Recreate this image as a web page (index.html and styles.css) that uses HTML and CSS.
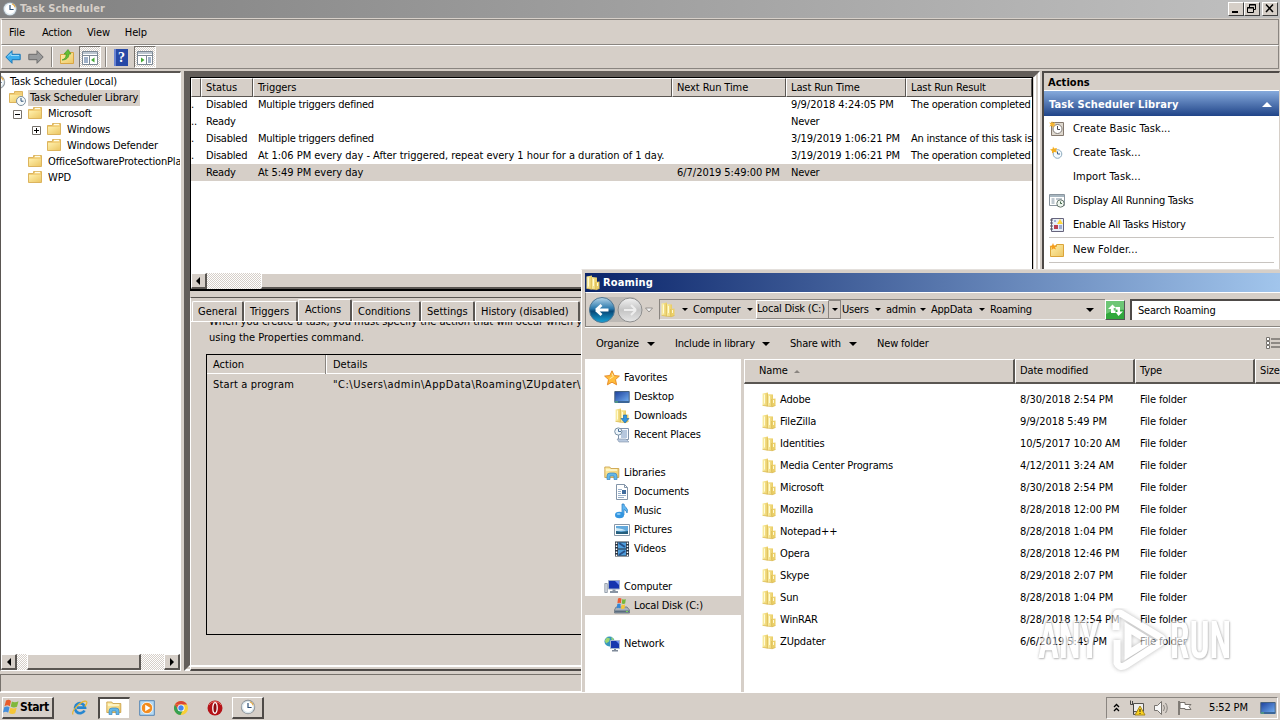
FILE: index.html
```html
<!DOCTYPE html>
<html lang="en">
  <head>
    <meta charset="UTF-8" />
    <title>Task Scheduler</title>
    <link rel="stylesheet" href="styles.css">
  </head>

  <body>
    <!-- icon sprite -->
    <svg class="sprite" width="0" height="0">
      <defs>
        <linearGradient id="gold" x1="0" y1="0" x2="1" y2="1">
          <stop offset="0" stop-color="#fff0ac" /><stop offset="1" stop-color="#ecc765" />
        </linearGradient>
        <linearGradient id="leaf" x1="0" y1="0" x2="1" y2="0">
          <stop offset="0" stop-color="#fbf0a8" /><stop offset="1" stop-color="#e9cb62" />
        </linearGradient>
        <linearGradient id="screen" x1="0" y1="0" x2="1" y2="1">
          <stop offset="0" stop-color="#1c409c" /><stop offset="1" stop-color="#72aef0" />
        </linearGradient>
        <linearGradient id="bluebtn" x1="0" y1="0" x2="0" y2="1">
          <stop offset="0" stop-color="#b5d4e8" /><stop offset=".45" stop-color="#2878ac" /><stop offset=".55" stop-color="#084878" /><stop offset="1" stop-color="#18a4d8" />
        </linearGradient>
        <linearGradient id="greybtn" x1="0" y1="0" x2="0" y2="1">
          <stop offset="0" stop-color="#f2f2f2" /><stop offset=".5" stop-color="#c4c4c4" /><stop offset="1" stop-color="#e6e6e6" />
        </linearGradient>
      </defs>
      <symbol id="clock" viewBox="0 0 16 16">
        <circle cx="8" cy="8" r="7.2" fill="#8c9298" /><circle cx="8" cy="8" r="6.3" fill="#dce8ee" /><circle cx="8" cy="8" r="4.9" fill="#fff" />
        <path d="M8 4v4.5h3.6" fill="none" stroke="#2c5078" stroke-width="1.2" /><path d="M10 2.8a5.6 5.6 0 0 1 3.3 3.6" fill="none" stroke="#e8a83c" stroke-width="1.2" />
      </symbol>
      <symbol id="folder" viewBox="0 0 16 16">
        <path d="M1.5 3.5h5v-2h8v11h-13z" fill="#f2cf78" stroke="#dcb45e" /><path d="M2 5h12v7H2z" fill="url(#gold)" /><path d="M8 2.5h5" stroke="#fffbe4" stroke-width="1.3" />
      </symbol>
      <symbol id="folderclock" viewBox="0 0 20 16">
        <path d="M1.5 3.5h5v-2h8v11h-13z" fill="#f2cf78" stroke="#dcb45e" /><path d="M2 5h12v7H2z" fill="url(#gold)" />
        <circle cx="13" cy="11" r="4.5" fill="#f6fafa" stroke="#7c8e9e" /><path d="M13 8v3.2h2.5" fill="none" stroke="#2c5078" />
      </symbol>
      <symbol id="files" viewBox="0 0 16 16">
        <path d="M1.500 1.500L7 .5v14l-5.500-1z" fill="url(#leaf)" /><path d="M6.500 2l5.500.5v12l-5.500-.5z" fill="url(#leaf)" />
        <path d="M10.500 7l4-.5v7l-3.500 1.500z" fill="#ecd06a" /><path d="M6.500 2v12M10.700 7v7.500M1.500 13.300l5.200.9 4.500.5 3.300-1.200" fill="none" stroke="#d9b850" stroke-width=".7" /><path d="M3.500 2.500v9M8.500 4v7M12.500 8v3" stroke="#fffbd6" />
      </symbol>
      <symbol id="back" viewBox="0 0 16 16"><path d="M.8 8l6.200-6.300v3.600h8.200v5.400H7v3.600z" fill="#3eaeec" stroke="#1b78b8" /><path d="M3 7.500l3-3v2h8" fill="none" stroke="#9cdcfa" /></symbol>
      <symbol id="forward" viewBox="0 0 16 16"><path d="M15.200 8L9 1.700v3.600H.8v5.400H9v3.600z" fill="#9a9a9a" stroke="#6c6c6c" /></symbol>
      <symbol id="upfolder" viewBox="0 0 16 16"><path d="M1.500 5.500h5l1.500-2h6.500v11h-13z" fill="url(#gold)" stroke="#d9a544" /><path d="M3 11c3-1 4.500-3 4-6H5l4-4.500L12 5h-2c0 4-3 6-7 6z" fill="#64be34" stroke="#3c9422" stroke-width=".6" /></symbol>
      <symbol id="panel" viewBox="0 0 16 14"><path d="M.5.5h15v13H.5z" fill="#fff" stroke="#7c8894" /><path d="M1 1h14v2H1z" fill="#bcc6d0" /><path d="M1 4.500h14M7.500 5v8.500" stroke="#7c8894" /><path d="M2 7h4M2 9h4M2 11h4" stroke="#3f6392" /><path d="M12.500 6.500v5l-3.500-2.500z" fill="#45a735" /></symbol>
      <symbol id="panelright" viewBox="0 0 16 14"><path d="M.5.5h15v13H.5z" fill="#fff" stroke="#7c8894" /><path d="M1 1h14v2H1z" fill="#bcc6d0" /><path d="M1 4.500h14M9.500 5v8.500" stroke="#7c8894" /><path d="M11 7h3M11 9h3M11 11h3" stroke="#3f6392" /><path d="M4 6.500v5l3.500-2.500z" fill="#45a735" /></symbol>
      <symbol id="basictask" viewBox="0 0 16 16"><path d="M2.500 1.500h12v13h-12z" fill="#ded8ce" stroke="#84786e" /><circle cx="8.500" cy="8" r="4.500" fill="#fff" stroke="#827c78" /><path d="M8.500 5v3.500H11" fill="none" stroke="#4c4c54" /><path d="M3 0l1 2.200L6.300 1 5.200 3.200 7 4.300 4.800 4.500 4 7 2.800 4.800.3 5.500 1.700 3.500 0 1.500l2.300.5z" fill="#f6b42c" /></symbol>
      <symbol id="newtask" viewBox="0 0 16 16"><circle cx="8.500" cy="9" r="4.300" fill="#f3faff" stroke="#8daabd" /><path d="M8.500 6.500V9H11" fill="none" stroke="#3e5f82" /><path d="M4 1.500l1.200 2L8 3l-1 2.200L8 7.500 5 7 3 8.500 3 6 1 4.500 3.500 4z" fill="#f4ae20" /></symbol>
      <symbol id="running" viewBox="0 0 16 16"><path d="M.5 1.500h15v11H.5z" fill="#fff" stroke="#8a959e" /><path d="M1 2h14v2H1z" fill="#a7b6c0" /><path d="M2.500 6h3M2.500 8h3M2.500 10h3M7 6h6" stroke="#8193a2" /><circle cx="11.500" cy="10.500" r="3.700" fill="#edf5ed" stroke="#67766f" /><path d="M11.500 8.500v2H13" fill="none" stroke="#416649" /></symbol>
      <symbol id="history" viewBox="0 0 16 16"><path d="M2.500 1.500h12v13h-12z" fill="#e7edf7" stroke="#66647c" /><path d="M1 3h3M1 6h3M1 9h3M1 12h3" stroke="#54525f" /><path d="M11 2l3 5H8z" fill="#ffd83a" /><path d="M5 8h4v4H5z" fill="#b83e50" /><path d="M10 9h3M10 11h3M5 4h2" stroke="#596fae" /></symbol>
      <symbol id="newfolder" viewBox="0 0 16 16"><path d="M1.500 4.500h6v-2h7v12h-13z" fill="url(#gold)" stroke="#dba43a" /><path d="M4 1l1 2.500 2.500-.5-1.500 2L7 7.500 4.500 6.500 2.500 8 2.700 5.500.5 4l2.500-.5z" fill="#f69d19" /></symbol>
      <symbol id="star" viewBox="0 0 16 16"><path d="M8 .8l2.200 4.700 5.200.6-3.900 3.500 1.100 5.200L8 12.200l-4.600 2.600 1.100-5.200L.6 6.100l5.200-.6z" fill="#ffbd3c" stroke="#e48620" stroke-width=".9" /><path d="M8 3.500l1.300 3L5.500 9" fill="none" stroke="#ffebaa" /></symbol>
      <symbol id="desktop" viewBox="0 0 16 16"><path d="M.8 2.500h14.400v10H.8z" fill="url(#screen)" stroke="#46617e" /><path d="M.5 12h15v2H.5z" fill="#3b6698" /><path d="M1 12.500h3v1H1z" fill="#62c272" /></symbol>
      <symbol id="downloads" viewBox="0 0 16 16"><use href="#files" /><path d="M9.500 7h3v3.500h2.500L11 15l-4-4.500h2.500z" fill="#2e94e2" stroke="#1462a6" stroke-width=".6" /></symbol>
      <symbol id="recent" viewBox="0 0 16 16"><path d="M4.500 1.500h10v11h-10z" fill="#f6faff" stroke="#8295ad" /><path d="M8 4h5M8 6h5M7 8h6M7 10h6" stroke="#7695bd" /><circle cx="4.300" cy="4.500" r="3.600" fill="#edf5fb" stroke="#7990a5" /><path d="M4.500 2v2.500H7" fill="none" stroke="#4d739b" /><path d="M3 12h9l3 3H5z" fill="#b8c9df" stroke="#8192a8" stroke-width=".6" /></symbol>
      <symbol id="libs" viewBox="0 0 16 16"><path d="M.8 4.500V2h5l1 1.500h8v9H.8z" fill="url(#gold)" stroke="#c69b3e" stroke-width=".8" /><path d="M2 5h11" stroke="#fffbd8" stroke-width="1.400" /><path d="M3 14.500V11q0-3 3-3h4q3 0 3 3v3.500h-3V11H6v3.500z" fill="#63b7e9" stroke="#3c86bd" stroke-width=".7" /></symbol>
      <symbol id="document" viewBox="0 0 16 16"><path d="M2.500.5h8l3 3v12h-11z" fill="#fff" stroke="#8395a9" /><path d="M10.500.5v3h3" fill="none" stroke="#8395a9" /><path d="M4 5.500h4M4 7.500h3M4 9.500h3M4 11.500h8M4 13.500h6" stroke="#98b0ca" /><path d="M8 6h4v4H8z" fill="#406c9d" /></symbol>
      <symbol id="music" viewBox="0 0 16 16"><path d="M8 1h2q0 2 2 3.500 2.500 2 1 5.500-.5-2.500-3-3.500V12H8z" fill="#61b7f3" stroke="#257abd" stroke-width=".7" /><ellipse cx="5.500" cy="12" rx="4.500" ry="3.300" fill="#3395e0" /><ellipse cx="4.700" cy="11" rx="2" ry="1.100" fill="#8cccf6" /></symbol>
      <symbol id="picture" viewBox="0 0 16 16"><path d="M.5 2.500h15v11H.5z" fill="#fff" stroke="#8998a8" /><path d="M2 4h12v8H2z" fill="#62a9dc" /><path d="M2 9l5 1 7-1v3H2z" fill="#255f7d" /><path d="M2 6l6 1 4 1.500-10 .5z" fill="#d1ecf8" /></symbol>
      <symbol id="video" viewBox="0 0 16 16"><path d="M1 .5h14v15H1z" fill="#2a3442" /><path d="M4 1.500h8v6H4zM4 8.500h8v6H4z" fill="#4f9ddb" /><path d="M5 2l6 4M5 14l6-4" stroke="#285188" stroke-width="2" /><path d="M2.500 1.500v14M13.500 1.500v14" stroke="#fff" stroke-width="1.500" stroke-dasharray="1.500 1.500" /></symbol>
      <symbol id="computer" viewBox="0 0 16 16"><path d="M.8 4.500h2.500v9H.8z" fill="#d7dce2" stroke="#8792a0" stroke-width=".8" /><path d="M4.500 1.500h11v8.500h-11z" fill="#1534ae" stroke="#9faec6" /><path d="M11 2h4v4z" fill="#718ff0" /><path d="M8.500 10.500h3V12H14v2H6v-2h2.500z" fill="#8995a4" /></symbol>
      <symbol id="disk" viewBox="0 0 16 16"><path d="M2 9h11l2.500 3v3H.5v-3z" fill="#a8b1bb" stroke="#66727e" stroke-width=".8" /><path d="M1 12.500h14v2H1z" fill="#5b6d7e" /><path d="M12 13h2v1h-2z" fill="#73dd4d" /><path d="M4 .5q2-1 3.500.3l-.6 4.500q-1.700-1-3.500 0z" fill="#ec5b32" /><path d="M8.300 1q1.500 1 3.500 0l-.6 4.500q-1.700.9-3.500 0z" fill="#76b83c" /><path d="M3.300 6q2-1 3.400.2l-.5 4q-1.700-1-3.500 0z" fill="#3486d5" /><path d="M7.600 6.500q1.700.9 3.500 0l-.6 4q-1.700.9-3.500 0z" fill="#f6c736" /></symbol>
      <symbol id="network" viewBox="0 0 16 16"><circle cx="5.500" cy="5.500" r="5" fill="#3697bf" /><path d="M3 1.500l3 1-1 3-3 2-1.200-3zM7 1l3 2-2 2z" fill="#9bd672" /><path d="M6.500 4.500h9v8h-9z" fill="#1636ae" stroke="#a8b8cf" /><path d="M12 5h3v3z" fill="#6c8df0" /><path d="M10 13h2v1h2v1.500H8V14h2z" fill="#7f8a99" /></symbol>
      <symbol id="flag" viewBox="0 0 16 16"><path d="M3 1.500q3-1.500 5 .5L6.800 7.200q-2.300-1.700-5.300 0z" fill="#e95c2b" /><path d="M8.900 2.500q3 1.700 6.600-.3L14 7.800q-3.300 1.500-6.300-.2z" fill="#80b83b" /><path d="M1.200 8.300q3-1.500 5.300 0L5.200 13.700Q3 12 0 13.500z" fill="#458fdc" /><path d="M7.400 8.800q3 1.500 6.300 0L12.200 14.300q-3 1.500-6.200-.2z" fill="#f5c637" /></symbol>
      <symbol id="ie" viewBox="0 0 16 16"><path d="M12.500 10.500A5 5 0 1 1 13 7.700H5" fill="none" stroke="#2686d0" stroke-width="2.700" /><path d="M1 14.500C-1 11 8 2 13 1.200c3-.3 2 3-.3 5.300" fill="none" stroke="#e9b631" stroke-width="1.200" /></symbol>
      <symbol id="player" viewBox="0 0 16 16"><path d="M.7.7h14.600v14.600H.7z" fill="#b5daf4" stroke="#5585b4" /><circle cx="8" cy="8" r="5.700" fill="#f38c1e" stroke="#fff" stroke-width=".8" /><path d="M6.200 4.800v6.400L11.500 8z" fill="#fff" /></symbol>
      <symbol id="chrome" viewBox="0 0 16 16"><circle cx="8" cy="8" r="7" fill="#f8cf38" /><path d="M1.900 4.500A7 7 0 0 1 14.100 4.500H8z" fill="#db4537" /><path d="M1.900 4.500a7 7 0 0 0 5.600 10.500l2.500-5L4.500 8z" fill="#37a052" /><path d="M1.900 4.500L5 9.500 8 4.800z" fill="#db4537" /><circle cx="8" cy="8" r="3.600" fill="#fff" /><circle cx="8" cy="8" r="2.700" fill="#4586ed" /></symbol>
      <symbol id="opera" viewBox="0 0 16 16"><circle cx="8" cy="8" r="7.500" fill="#b51218" /><path d="M2 5a7 7 0 0 1 12 0" stroke="#e8766a" fill="none" /><ellipse cx="8" cy="8" rx="2.200" ry="5.300" fill="#8e0b10" stroke="#fff" stroke-width="1.300" /></symbol>
    </svg>

    <div class="desktop">
      <div class="scheduler">
        <div class="titlebar">
          <svg class="icon"><use href="#clock" /></svg>
          <span class="title">Task Scheduler</span>
          <div class="winbtns">
            <div class="winbtn"><svg width="13" height="11"><path d="M3 9h6" stroke="#000" stroke-width="2" /></svg></div>
            <div class="winbtn"><svg width="13" height="11"><path d="M4.500 4V1.500h6v5H8.500M4 2h7M2.500 4.500h6v5h-6zM2 5h7" fill="none" stroke="#000" /></svg></div>
            <div class="winbtn gap"><svg width="13" height="11"><path d="M3 1.500l7 7.500M10 1.500L3 9" stroke="#000" stroke-width="1.500" /></svg></div>
          </div>
        </div>
        <div class="menubar"><span class="file">File</span><span>Action</span><span>View</span><span>Help</span></div>
        <div class="toolbar">
          <svg class="icon"><use href="#back" /></svg>
          <svg class="icon fwd"><use href="#forward" /></svg>
          <i class="sep"></i>
          <svg class="icon up"><use href="#upfolder" /></svg>
          <div class="pressed"><svg width="16" height="14"><use href="#panel" /></svg></div>
          <i class="sep second"></i>
          <svg class="help" width="14" height="17"><path d="M0 0h14v17H0z" fill="#2749a6" /><path d="M0 0h2v17H0z" fill="#6984d3" /><text x="4" y="13" class="qmark">?</text></svg>
          <div class="pressed last"><svg width="16" height="14"><use href="#panelright" /></svg></div>
        </div>

        <div class="main">
          <div class="tree">
            <div class="nodes">
              <div class="node root"><svg class="icon"><use href="#clock" /></svg><span>Task Scheduler (Local)</span></div>
              <div class="node lib"><svg width="20" height="16"><use href="#folderclock" /></svg><span class="picked">Task Scheduler Library</span></div>
              <div class="node l1"><svg class="box" width="9" height="9"><path d="M.5.5h8v8h-8z" fill="#fff" stroke="#77726c" /><path d="M2 4.500h5" stroke="#000" /></svg><svg class="icon"><use href="#folder" /></svg><span>Microsoft</span></div>
              <div class="node l2"><svg class="box" width="9" height="9"><path d="M.5.5h8v8h-8z" fill="#fff" stroke="#77726c" /><path d="M2 4.500h5M4.500 2v5" stroke="#000" /></svg><svg class="icon"><use href="#folder" /></svg><span>Windows</span></div>
              <div class="node l2"><i class="box"></i><svg class="icon"><use href="#folder" /></svg><span>Windows Defender</span></div>
              <div class="node l1"><i class="box"></i><svg class="icon"><use href="#folder" /></svg><span>OfficeSoftwareProtectionPlatform</span></div>
              <div class="node l1"><i class="box"></i><svg class="icon"><use href="#folder" /></svg><span>WPD</span></div>
            </div>
            <div class="hscroll">
              <div class="arrow"><i class="tri left"></i></div>
              <div class="thumb"></div>
              <div class="arrow end"><i class="tri right"></i></div>
            </div>
          </div>

          <div class="center">
            <div class="tasks">
              <div class="trow thead"><span></span><span>Status</span><span>Triggers</span><span>Next Run Time</span><span>Last Run Time</span><span>Last Run Result</span></div>
              <div class="trow"><span>.</span><span>Disabled</span><span>Multiple triggers defined</span><span></span><span class="date">9/9/2018 4:24:05 PM</span><span>The operation completed</span></div>
              <div class="trow"><span>..</span><span>Ready</span><span></span><span></span><span>Never</span><span></span></div>
              <div class="trow"><span>.</span><span>Disabled</span><span>Multiple triggers defined</span><span></span><span class="date">3/19/2019 1:06:21 PM</span><span>An instance of this task is</span></div>
              <div class="trow"><span>.</span><span>Disabled</span><span class="date">At 1:06 PM every day - After triggered, repeat every 1 hour for a duration of 1 day.</span><span></span><span class="date">3/19/2019 1:06:21 PM</span><span>The operation completed</span></div>
              <div class="trow current"><span></span><span>Ready</span><span class="date">At 5:49 PM every day</span><span class="date">6/7/2019 5:49:00 PM</span><span>Never</span><span></span></div>
              <div class="hscroll wide">
                <div class="arrow"><i class="tri left"></i></div>
                <div class="thumb"></div>
              </div>
            </div>
            <div class="details">
              <div class="tabs">
                <span class="tab t1">General</span><span class="tab t2">Triggers</span><span class="tab t3 active">Actions</span><span class="tab t4">Conditions</span><span class="tab t5">Settings</span><span class="tab t6">History (disabled)</span>
              </div>
              <div class="tabpage">
                <p class="hint">When you create a task, you must specify the action that will occur when your task starts.<br>using the Properties command.</p>
                <div class="actionlist">
                  <div class="ahead"><span>Action</span><span>Details</span></div>
                  <div class="arow"><span>Start a program</span><span class="path">"C:\Users\admin\AppData\Roaming\ZUpdater\</span></div>
                </div>
              </div>
            </div>
          </div>

          <div class="actions">
            <div class="acthead">Actions</div>
            <div class="actgroup"><span>Task Scheduler Library</span><i></i></div>
            <div class="act dots"><svg class="icon"><use href="#basictask" /></svg>Create Basic Task...</div>
            <div class="act dots"><svg class="icon"><use href="#newtask" /></svg>Create Task...</div>
            <div class="act dots"><svg class="icon"></svg>Import Task...</div>
            <div class="act"><svg class="icon"><use href="#running" /></svg>Display All Running Tasks</div>
            <div class="act"><svg class="icon"><use href="#history" /></svg>Enable All Tasks History</div>
            <div class="act dots ruled"><svg class="icon"><use href="#newfolder" /></svg>New Folder...</div>
          </div>
        </div>
        <div class="status"></div>
      </div>

      <div class="taskbar">
        <div class="start"><svg class="icon"><use href="#flag" /></svg>Start</div>
        <div class="quick"><svg class="icon"><use href="#ie" /></svg></div>
        <div class="quick open"><svg class="icon"><use href="#libs" /></svg></div>
        <div class="quick"><svg class="icon"><use href="#player" /></svg></div>
        <div class="quick"><svg class="icon"><use href="#chrome" /></svg></div>
        <div class="quick"><svg class="icon"><use href="#opera" /></svg></div>
        <div class="quick raised"><svg class="icon"><use href="#clock" /></svg></div>
        <div class="tray">
          <svg width="7" height="10"><path d="M1 4l2.500-2.500L6 4M1 8l2.500-2.500L6 8" fill="none" stroke="#000" stroke-width="1.300" /></svg>
          <svg class="net" width="17" height="16"><path d="M4.500 3.500h10v8h-10z" fill="#eee" stroke="#55534f" /><path d="M1.500.5v4h3v10h3M3.500 1v3" fill="none" stroke="#444" /><path d="M11 6l5 9H6z" fill="#fad11e" stroke="#a8881c" /><path d="M11 9v3M11 13v1" stroke="#222" /></svg>
          <svg class="vol" width="18" height="16"><path d="M1.500 5.500h3l4-4v13l-4-4h-3z" fill="#f8f8f8" stroke="#77736e" /><path d="M10.500 5q2 3 0 6M12.500 3q3.500 5 0 10" fill="none" stroke="#85817c" /></svg>
          <svg class="flg" width="17" height="16"><path d="M2 1v14" stroke="#66625d" stroke-width="1.500" /><path d="M3 2.500h5v2h6l-2 2 2 3H8v-1H3z" fill="#fff" stroke="#77736e" /></svg>
          <span class="time">5:52 PM</span>
          <svg class="icon"><use href="#desktop" /></svg>
        </div>
      </div>

      <div class="explorer">
        <div class="etitle"><svg class="icon"><use href="#files" /></svg>Roaming</div>
        <div class="address">
          <svg class="nav" width="66" height="28">
            <path d="M13 1h32q8 3 8 12t-8 13H13z" fill="#bdb9b5" />
            <circle cx="14" cy="14" r="12.500" fill="url(#bluebtn)" stroke="#4d7592" /><path d="M8 14l5.500-5M8 14l5.500 5M8 14h12.500" stroke="#fff" stroke-width="2.800" />
            <circle cx="42" cy="14" r="12" fill="url(#greybtn)" stroke="#8f8f8f" /><path d="M48 14l-5-5M48 14l-5 5M48 14H36" stroke="#eee" stroke-width="2" />
            <path d="M57.500 12h7L61 16z" fill="#f4f4f4" stroke="#85817d" stroke-width=".8" />
          </svg>
          <div class="crumbs">
            <svg class="icon"><use href="#files" /></svg>
            <i class="drop d0"></i><span class="c1">Computer</span><i class="drop"></i><span class="c2 hot">Local Disk (C:)</span><i class="hotdrop"><i class="drop"></i></i><span class="c3">Users</span><i class="drop"></i><span class="c4">admin</span><i class="drop"></i><span class="c5">AppData</span><i class="drop"></i><span class="c6">Roaming</span><i class="drop big"></i>
          </div>
          <svg class="refresh" width="20" height="20"><path d="M0 0h20v20H0z" fill="#31a83c" /><path d="M0 0h20v9Q10 8 0 13z" fill="#6dc675" /><path d="M2 8l4.500-4.500L10 7H7.700v2.500H9.500v2.500H5V8zM17 10.500l-4.500 4.500L9.500 11h2V8.500H9.700V6h4.300v4.500z" fill="#fff" /></svg>
          <div class="search">Search Roaming</div>
        </div>
        <div class="commands">
          <span class="k1">Organize</span><i class="drop"></i><span class="k2">Include in library</span><i class="drop"></i><span class="k3">Share with</span><i class="drop"></i><span class="k4">New folder</span>
          <svg class="views" width="14" height="13"><path d="M.5.5h3v3h-3zM.5 4.500h3v3h-3zM.5 8.500h3v3h-3z" fill="#fff" stroke="#77736e" /><path d="M5 2h9M5 6h9M5 10h9" stroke="#77736e" stroke-width="1.500" /></svg>
        </div>
        <div class="ebody">
          <div class="sidebar">
            <div class="place"><svg class="icon"><use href="#star" /></svg>Favorites</div>
            <div class="place sub"><svg class="icon"><use href="#desktop" /></svg>Desktop</div>
            <div class="place sub"><svg class="icon"><use href="#downloads" /></svg>Downloads</div>
            <div class="place sub"><svg class="icon"><use href="#recent" /></svg>Recent Places</div>
            <div class="place next"><svg class="icon"><use href="#libs" /></svg>Libraries</div>
            <div class="place sub"><svg class="icon"><use href="#document" /></svg>Documents</div>
            <div class="place sub"><svg class="icon"><use href="#music" /></svg>Music</div>
            <div class="place sub"><svg class="icon"><use href="#picture" /></svg>Pictures</div>
            <div class="place sub"><svg class="icon"><use href="#video" /></svg>Videos</div>
            <div class="place next"><svg class="icon"><use href="#computer" /></svg>Computer</div>
            <div class="place sub here"><svg class="icon"><use href="#disk" /></svg>Local Disk (C:)</div>
            <div class="place next"><svg class="icon"><use href="#network" /></svg>Network</div>
          </div>
          <div class="files">
            <div class="frow fhead"><span>Name<i class="sort"></i></span><span>Date modified</span><span>Type</span><span>Size</span></div>
            <div class="frow"><span><svg class="icon"><use href="#files" /></svg>Adobe</span><span class="date">8/30/2018 2:54 PM</span><span>File folder</span></div>
            <div class="frow"><span><svg class="icon"><use href="#files" /></svg>FileZilla</span><span class="date">9/9/2018 5:49 PM</span><span>File folder</span></div>
            <div class="frow"><span><svg class="icon"><use href="#files" /></svg>Identities</span><span class="date">10/5/2017 10:20 AM</span><span>File folder</span></div>
            <div class="frow"><span><svg class="icon"><use href="#files" /></svg>Media Center Programs</span><span class="date">4/12/2011 3:24 AM</span><span>File folder</span></div>
            <div class="frow"><span><svg class="icon"><use href="#files" /></svg>Microsoft</span><span class="date">8/30/2018 2:54 PM</span><span>File folder</span></div>
            <div class="frow"><span><svg class="icon"><use href="#files" /></svg>Mozilla</span><span class="date">8/28/2018 12:00 PM</span><span>File folder</span></div>
            <div class="frow"><span><svg class="icon"><use href="#files" /></svg>Notepad++</span><span class="date">8/28/2018 1:04 PM</span><span>File folder</span></div>
            <div class="frow"><span><svg class="icon"><use href="#files" /></svg>Opera</span><span class="date">8/28/2018 12:46 PM</span><span>File folder</span></div>
            <div class="frow"><span><svg class="icon"><use href="#files" /></svg>Skype</span><span class="date">8/29/2018 2:07 PM</span><span>File folder</span></div>
            <div class="frow"><span><svg class="icon"><use href="#files" /></svg>Sun</span><span class="date">8/28/2018 1:04 PM</span><span>File folder</span></div>
            <div class="frow"><span><svg class="icon"><use href="#files" /></svg>WinRAR</span><span class="date">8/28/2018 12:54 PM</span><span>File folder</span></div>
            <div class="frow"><span><svg class="icon"><use href="#files" /></svg>ZUpdater</span><span class="date">6/6/2019 5:49 PM</span><span>File folder</span></div>
          </div>
        </div>
      </div>

      <div class="watermark">
        <span>ANY</span>
        <svg width="62" height="66" viewBox="0 0 62 66"><path d="M8 22V9q0-6 6-3l38 23q5 3 0 6L18 57q-6 4-9-2V32M20 20v26l21-13z" /></svg>
        <span>RUN</span>
      </div>
    </div>
  </body>
</html>
```
FILE: styles.css
```css
* {
  margin: 0;
  padding: 0;
  box-sizing: border-box;
}

body {
  width: 1280px;
  height: 720px;
  overflow: hidden;
  background: #d6cfc8;
  color: #000;
  font-family: "DejaVu Sans Condensed", "DejaVu Sans", sans-serif;
  font-stretch: condensed;
  font-size: 11px;
  line-height: 16px;
  letter-spacing: -0.15px;
  white-space: nowrap;
}

svg {
  display: block;
  flex: none;
}

.sprite {
  position: absolute;
}

.icon {
  width: 16px;
  height: 16px;
}

.date {
  letter-spacing: -0.03px;
}

.desktop {
  position: relative;
  width: 1280px;
  height: 720px;
  overflow: hidden;
}

/* scheduler window */
.scheduler {
  display: flex;
  flex-direction: column;
  height: 692px;
}

.titlebar {
  display: flex;
  align-items: center;
  height: 18px;
  padding: 0 2px;
  background: linear-gradient(to right, #808080, #c0c0c0);
}

.title {
  margin-left: 2px;
  color: #d6cfc8;
  font-weight: bold;
  letter-spacing: 0.08px;
}

.winbtns {
  display: flex;
  margin-left: auto;
}

.winbtn {
  width: 16px;
  height: 14px;
  background: #d6cfc8;
  border: 1px solid #fff;
  border-right-color: #404040;
  border-bottom-color: #404040;
}

.gap {
  margin-left: 2px;
}

.menubar {
  display: flex;
  align-items: center;
  gap: 15px;
  height: 26px;
  margin: 1px 1px 0;
  padding: 1px 0 0 7px;
  border: 1px solid #fff;
  border-top-color: #8a8580;
  border-right-color: #8a8580;
  border-bottom-color: #8a8580;
  letter-spacing: -0.15px;
}

.file {
  margin-right: 2px;
}

.toolbar {
  display: flex;
  align-items: center;
  height: 24px;
  margin: 0 1px;
  padding-left: 3px;
  border: 1px solid #fff;
  border-right-color: #8a8580;
  border-bottom-color: #8a8580;
}

.fwd {
  margin-left: 7px;
}

.sep {
  width: 2px;
  height: 20px;
  margin-left: 7px;
  background: #8a8580;
  border-right: 1px solid #fff;
}

.up {
  margin: 0 4px 0 6px;
}

.pressed {
  display: flex;
  align-items: center;
  justify-content: center;
  width: 22px;
  height: 22px;
  padding-top: 2px;
  border: 1px solid #fff;
  border-top-color: #77726c;
  border-left-color: #77726c;
  background: repeating-conic-gradient(#fff 0 25%, #d6cfc8 0 50%) 0 0 / 2px 2px;
}

.second {
  margin-left: 4px;
}

.help {
  margin-left: 7px;
}

.last {
  margin-left: 6px;
}

.qmark {
  fill: #fff;
  font: bold 14px "Liberation Serif", serif;
}

.main {
  display: flex;
  height: 602px;
  margin-top: 2px;
}

.tree {
  display: flex;
  flex-direction: column;
  width: 181px;
  height: 600px;
  background: #fff;
  border: 1px solid #fff;
  border-top: 2px solid #5a5652;
  border-left: 1px solid #5a5652;
}

.nodes {
  flex: 1;
  padding-top: 1px;
  overflow: hidden;
}

.node {
  display: flex;
  align-items: center;
  height: 16px;
}

.root svg {
  margin: 0 4px 0 -11px;
}

.root {
  overflow: hidden;
}

.lib {
  padding-left: 7px;
}

.picked {
  padding: 0 2px;
  background: #d6cfc8;
}

.l1 {
  padding-left: 12px;
}

.l2 {
  padding-left: 31px;
}

.box {
  flex: none;
  width: 9px;
  height: 9px;
  margin-right: 5px;
}

.l1 span {
  margin-left: 5px;
}

.l2 span {
  margin-left: 5px;
}

.hscroll {
  display: flex;
  height: 16px;
  background: repeating-conic-gradient(#fff 0 25%, #d6cfc8 0 50%) 0 0 / 2px 2px;
}

.arrow,
.thumb {
  height: 16px;
  background: #d6cfc8;
  border: 1px solid #fff;
  border-right: 2px solid #5a5652;
  border-bottom: 2px solid #5a5652;
}

.arrow {
  display: flex;
  align-items: center;
  justify-content: center;
  width: 16px;
}

.end {
  margin-left: auto;
}

.tree .thumb {
  width: 114px;
  margin-left: 10px;
}

.tri {
  border: 4px solid transparent;
}

.left {
  border-left: 0;
  border-right-color: #000;
}

.right {
  border-right: 0;
  border-left-color: #000;
}

/* task list and details */
.center {
  width: 856px;
  height: 600px;
  margin-left: 3px;
  border-style: solid double double solid;
  border-width: 6px;
  border-color: #635e5a #fff #fff #635e5a;
}

.tasks {
  display: flex;
  flex-direction: column;
  width: 843px;
  height: 214px;
  background: #fff;
  border: 1px solid #000;
  border-bottom-width: 2px;
  overflow: hidden;
  letter-spacing: -0.22px;
}

.trow {
  display: grid;
  grid-template-columns: 10px 52px 419px 114px 120px 126px;
  height: 17px;
  line-height: 17px;
}

.trow span {
  padding-left: 5px;
}

.trow span:first-child {
  padding-left: 0;
}

.trow.thead {
  height: 18px;
  line-height: 17px;
}

.thead span {
  background: #d6cfc8;
  border: 1px solid #fff;
  border-right-color: #5a5652;
  border-bottom-color: #5a5652;
  padding-left: 4px;
  letter-spacing: -0.1px;
}

.current {
  background: #d6cfc8;
}

.wide {
  margin-top: auto;
}

.wide .thumb {
  width: 772px;
  margin-left: 54px;
}

.details {
  height: 374px;
  margin-top: 6px;
  border-top: 1px solid #5a5652;
  border-left: 1px solid #fff;
  border-bottom: 2px solid #4e4a47;
}

.tabs {
  display: flex;
  align-items: flex-end;
  height: 23px;
  padding-left: 1px;
  letter-spacing: 0;
}

.tab {
  height: 20px;
  padding-left: 5px;
  line-height: 20px;
  border: 1px solid #fff;
  border-right: 2px solid #5a5652;
  border-bottom: 0;
  border-radius: 2px 2px 0 0;
}

.t1 {
  width: 52px;
}

.t2 {
  width: 54px;
}

.t3 {
  width: 54px;
  padding-left: 6px;
}

.t4 {
  width: 69px;
}

.t5 {
  width: 54px;
}

.t6 {
  width: 105px;
}

.active {
  height: 22px;
}

.tabpage {
  height: 348px;
  padding-left: 15px;
  border-top: 1px solid #fff;
  overflow: hidden;
  letter-spacing: 0;
}

.hint {
  height: 33px;
  margin-top: -8px;
  padding-left: 3px;
  line-height: 16px;
}

.actionlist {
  height: 281px;
  margin-top: 7px;
  border: 1px solid #000;
}

.ahead,
.arow {
  display: grid;
  grid-template-columns: 120px 1fr;
}

.ahead {
  height: 19px;
  line-height: 19px;
  border-bottom: 1px solid #fff;
}

.ahead span,
.arow span {
  padding-left: 6px;
}

.ahead span:first-child {
  border-right: 1px solid #fff;
  box-shadow: inset -1px 0 #8a8580;
}

.arow {
  line-height: 21px;
  letter-spacing: 0.15px;
}

.path {
  letter-spacing: 0.52px;
}

/* actions pane */
.actions {
  width: 238px;
  height: 600px;
  margin-left: 2px;
  background: #fff;
  border-top: 2px solid #4e4a47;
  border-left: 2px solid #4e4a47;
  border-right: 1px solid #d6cfc8;
}

.acthead {
  height: 17px;
  padding-left: 4px;
  line-height: 19px;
  background: #d6cfc8;
  font-weight: bold;
  letter-spacing: 0.05px;
}

.actgroup {
  display: flex;
  align-items: center;
  justify-content: space-between;
  height: 26px;
  margin-bottom: 1px;
  padding: 2px 7px 0 5px;
  background: linear-gradient(#86aadc, #204488);
  border-top: 1px solid #fff;
  color: #fff;
  font-weight: bold;
  letter-spacing: 0.12px;
}

.actgroup i {
  border: 5px solid transparent;
  border-top: 0;
  border-bottom-color: #fff;
}

.act {
  display: flex;
  align-items: center;
  gap: 8px;
  height: 24px;
  margin: 0 5px;
  letter-spacing: -0.18px;
}

.dots {
  letter-spacing: 0.08px;
}

.ruled {
  height: 26px;
  border-top: 1px solid #c8c4c0;
  border-bottom: 1px solid #c8c4c0;
}

.status {
  height: 18px;
  margin-top: 1px;
  border-top: 1px solid #77726c;
  border-left: 1px solid #77726c;
  border-bottom: 1px solid #fff;
}

/* taskbar */
.taskbar {
  display: flex;
  align-items: center;
  height: 28px;
  padding: 2px 2px 0;
  border-top: 1px solid #fff;
}

.start {
  display: flex;
  align-items: center;
  gap: 1px;
  width: 52px;
  height: 22px;
  margin-right: 10px;
  border: 1px solid #fff;
  border-right: 2px solid #4e4a47;
  border-bottom: 2px solid #4e4a47;
  font-size: 12px;
  font-weight: bold;
  letter-spacing: -0.4px;
}

.quick {
  display: flex;
  align-items: center;
  justify-content: center;
  width: 32px;
  height: 22px;
  margin-right: 1.7px;
}

.open {
  background: #fff;
  border: 1px solid #d6cfc8;
  border-top: 2px solid #4e4a47;
  border-left: 2px solid #4e4a47;
}

.raised {
  border: 1px solid #fff;
  border-right: 2px solid #4e4a47;
  border-bottom: 2px solid #4e4a47;
}

.tray {
  display: flex;
  align-items: center;
  width: 172px;
  height: 22px;
  margin-left: auto;
  padding-left: 6px;
  border: 1px solid #fff;
  border-top-color: #8a8580;
  border-left-color: #8a8580;
}

.net {
  margin-left: 9px;
}

.vol {
  margin-left: 7px;
}

.flg {
  margin-left: 6px;
}

.time {
  width: 51px;
  margin-left: 15px;
}

/* explorer window lies over the scheduler */
.explorer {
  position: absolute;
  left: 581px;
  top: 269px;
  width: 720px;
  height: 423px;
  padding: 3px 0 0 3px;
  background: #d6cfc8;
  border-top: 1px solid #e4e0dc;
  border-left: 1px solid #fff;
}

.etitle {
  display: flex;
  align-items: center;
  gap: 2px;
  height: 19px;
  background: linear-gradient(to right, #0a246a, #a6caf0);
  color: #fff;
  font-weight: bold;
  letter-spacing: 0.15px;
}

.address {
  display: flex;
  align-items: center;
  height: 35px;
  padding-left: 2px;
  border: 1px solid #8a8580;
  border-top-color: #fff;
}

.crumbs {
  display: flex;
  align-items: center;
  width: 446px;
  height: 21px;
  margin-left: 5px;
  border-top: 1px solid #8a8580;
  border-left: 1px solid #8a8580;
  border-bottom: 1px solid #eee;
  letter-spacing: -0.22px;
}

.drop {
  flex: none;
  width: 0;
  height: 0;
  border: 3px solid transparent;
  border-top-color: #000;
  border-bottom: 0;
}

.d0 {
  margin: 0 5px 0 6px;
}

.c1 {
  width: 54px;
}

.hot {
  width: 73px;
  height: 19px;
  margin-left: 3px;
  border: 1px solid #8a8580;
  border-top-color: #fff;
  border-left-color: #fff;
}

.hotdrop {
  display: flex;
  align-items: center;
  width: 12px;
  height: 19px;
  padding-left: 3px;
  margin-right: 1px;
  border: 1px solid #8a8580;
  border-left: 0;
}

.c3 {
  width: 33px;
}

.c4,
.c5,
.c6 {
  margin-left: 5px;
}

.c4 {
  width: 34px;
}

.c5 {
  width: 48px;
}

.big {
  margin-left: auto;
  margin-right: 11px;
  border-width: 4px 4px 0;
}

.refresh {
  border: 1px solid #fff;
  border-right-color: #555;
  border-bottom-color: #555;
}

.search {
  flex: 1;
  height: 21px;
  margin-left: 5px;
  padding-left: 6px;
  line-height: 19px;
  background: #fff;
  border-top: 2px solid #4e4a47;
  border-left: 2px solid #4e4a47;
  letter-spacing: -0.22px;
}

.commands {
  display: flex;
  align-items: center;
  height: 32px;
  padding-left: 11px;
  border-top: 1px solid #fff;
  letter-spacing: -0.18px;
}

.commands .drop {
  border-width: 4px 4px 0;
}

.k1 {
  width: 51px;
}

.k2 {
  width: 87px;
  margin-left: 20px;
}

.k3 {
  width: 59px;
  margin-left: 20px;
}

.k4 {
  margin-left: 20px;
}

.views {
  margin-left: 337px;
}

.ebody {
  display: flex;
  height: 333px;
}

.sidebar {
  flex: none;
  width: 156px;
  padding-top: 9px;
  background: #fff;
}

.place {
  display: flex;
  align-items: center;
  gap: 4px;
  height: 19px;
  padding: 1px 0 0 19px;
}

.sub {
  padding-left: 29px;
}

.next {
  margin-top: 19px;
}

.here {
  background: #d6cfc8;
}

.files {
  flex: none;
  width: 600px;
  margin-left: 3px;
  background: #fff;
}

.frow {
  display: grid;
  grid-template-columns: 271px 120px 120px 89px;
  height: 22px;
  line-height: 22px;
}

.frow span {
  display: flex;
  align-items: center;
  gap: 3px;
  padding-left: 5px;
}

.frow span:first-child {
  gap: 3px;
  padding-left: 17px;
}

.frow.fhead {
  height: 23px;
  margin-bottom: 7px;
}

.frow.fhead span {
  padding-left: 4px;
  background: #d6cfc8;
  border: 1px solid #fff;
  border-right: 2px solid #5a5652;
  border-bottom: 2px solid #5a5652;
}

.frow.fhead span:first-child {
  gap: 6px;
  padding-left: 14px;
}

.sort {
  border: 3px solid transparent;
  border-top: 0;
  border-bottom-color: #8a8580;
}

/* watermark over the file list */
.watermark {
  position: absolute;
  left: 1038px;
  top: 608px;
  display: flex;
  align-items: center;
  height: 66px;
  opacity: 0.6;
}

.watermark span {
  width: 70px;
  color: #fff;
  font-family: Roboto, sans-serif;
  font-size: 51px;
  font-weight: bold;
  line-height: 66px;
  letter-spacing: 0;
  transform: scaleX(0.69);
  transform-origin: left;
  text-shadow: 0 0 3px #888, 1px 1px 2px #999;
}

.watermark path {
  fill: none;
  stroke: #fff;
  stroke-width: 7px;
  filter: drop-shadow(0 0 2px #888);
}
```
